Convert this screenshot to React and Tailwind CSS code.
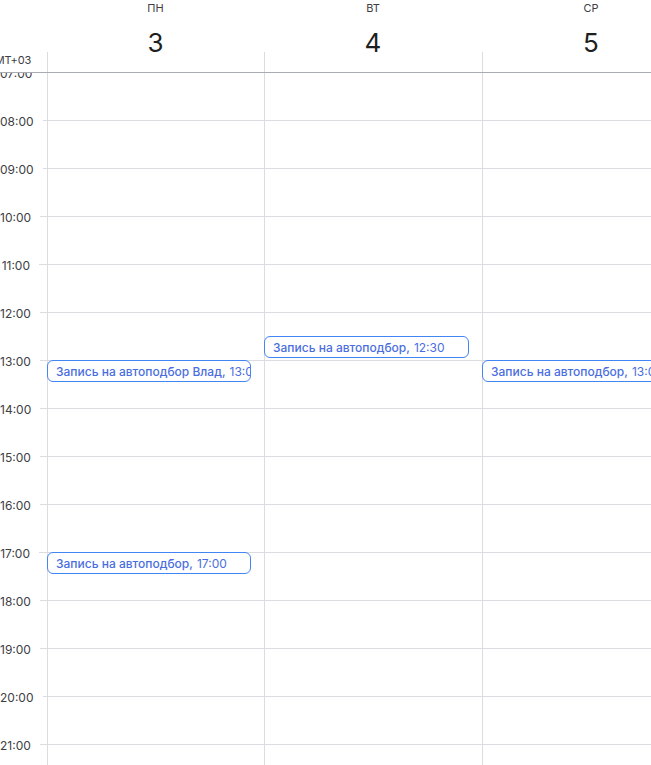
const HOURS = [7, 8, 9, 10, 11, 12, 13, 14, 15, 16, 17, 18, 19, 20, 21];

const DAYS = [
  {
    name: "ПН",
    num: 3,
    width: "w-[217px]",
    events: [
      { title: "Запись на автоподбор Влад", time: "13:00", start: 13 },
      { title: "Запись на автоподбор", time: "17:00", start: 17 },
    ],
  },
  {
    name: "ВТ",
    num: 4,
    width: "w-[218px]",
    events: [{ title: "Запись на автоподбор", time: "12:30", start: 12.5 }],
  },
  {
    name: "СР",
    num: 5,
    width: "w-[218px]",
    events: [{ title: "Запись на автоподбор", time: "13:00", start: 13 }],
  },
];

const pad = (h) => String(h).padStart(2, "0") + ":00";

function EventChip({ ev }) {
  // top is pinned to the hour grid, chip sits over the cells
  return (
    <div
      className="absolute left-[-1px] right-[13px] h-[22px] rounded-[6px] border border-[#4285f4] bg-white px-2 pt-[2px] flex items-center overflow-hidden whitespace-nowrap text-[12px] leading-none text-[#4a6ee0]"
      style={{ top: (ev.start - 7) * 48 - 1 }}
    >
      <span className="font-medium">{ev.title},</span>
      <span className="ml-1">{ev.time}</span>
    </div>
  );
}

export default function App() {
  return (
    <div className="w-[651px] h-[765px] overflow-hidden bg-white font-['Inter','Noto_Sans',sans-serif] text-[#3c4043]">
      {/* шапка */}
      <div className="relative z-10 flex h-[73px] bg-white border-b border-[#a8abaf]">
        <div className="w-[47px] shrink-0 flex justify-end items-start pr-[16px] pt-[53px]">
          <span className="whitespace-nowrap text-[11px] leading-[14px] tracking-[-0.2px]">GMT+03</span>
        </div>
        {DAYS.map((d) => (
          <div key={d.name} className={`${d.width} shrink-0 flex flex-col`}>
            <div className="h-[52px] flex flex-col items-center">
              <div className="mt-[1px] text-[11px] leading-[14px] text-[#3c4043]">{d.name}</div>
              <div className="mt-[15px] text-[26px] leading-[26px] text-[#1f1f1f]">{d.num}</div>
            </div>
            <div className="flex-1 border-l border-[#dadce0]" />
          </div>
        ))}
      </div>

      {/* сетка */}
      <div className="flex items-start">
        <div className="w-[47px] shrink-0 -mt-[25px] flex flex-col">
          {HOURS.map((h) => (
            <div key={h} className="h-[48px] flex items-start justify-end">
              <span className="mt-[19px] text-[12px] leading-[14px] text-[#3c4043]">{pad(h)}</span>
              <div className="mt-[24px] ml-[9px] w-[8px] h-px bg-[#dadce0]" />
            </div>
          ))}
        </div>
        {DAYS.map((d) => (
          <div key={d.name} className={`${d.width} shrink-0 relative border-l border-[#dadce0]`}>
            {HOURS.map((h) => (
              <div key={h} className="h-[48px] border-b border-[#dadce0]" />
            ))}
            {d.events.map((ev) => (
              <EventChip key={ev.time + ev.title} ev={ev} />
            ))}
          </div>
        ))}
      </div>
    </div>
  );
}
